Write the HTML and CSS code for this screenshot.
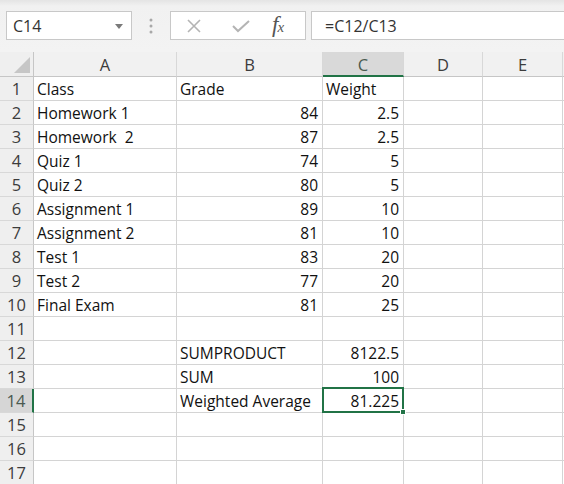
FILE: index.html
```html
<!DOCTYPE html>
<html>
<head>
<meta charset="utf-8">
<link rel="stylesheet" href="styles.css">
</head>
<body>
<div class="app">
  <div class="toolbar">
    <div class="namebox">
      <span class="nb-text">C14</span>
      <svg class="nb-arrow" width="8" height="5" viewBox="0 0 8 5"><path d="M0 0H8L4 5Z" fill="#7a7a7a"/></svg>
    </div>
    <div class="grip">
      <svg width="4" height="16" viewBox="0 0 4 16"><circle cx="2" cy="2" r="1.5" fill="#a8a8a8"/><circle cx="2" cy="8" r="1.5" fill="#a8a8a8"/><circle cx="2" cy="14" r="1.5" fill="#a8a8a8"/></svg>
    </div>
    <div class="fxbox">
      <svg class="ico" width="16" height="16" viewBox="0 0 16 16"><path d="M2 2L14 14M14 2L2 14" stroke="#b4b4b4" stroke-width="1.6" fill="none"/></svg>
      <svg class="ico" width="18" height="14" viewBox="0 0 18 14"><path d="M1 7L6 12L17 2" stroke="#b4b4b4" stroke-width="2" fill="none"/></svg>
      <span class="fx">f<span class="fx-x">x</span></span>
    </div>
    <div class="formula">=C12/C13</div>
  </div>
  <div class="sheet">
    <div class="corner"><span class="tri"></span></div>
    <div class="ch">A</div><div class="ch">B</div><div class="ch sel">C</div><div class="ch">D</div><div class="ch">E</div><div class="ch last"></div>

    <div class="rh">1</div><div class="c">Class</div><div class="c">Grade</div><div class="c">Weight</div><div class="c"></div><div class="c"></div><div class="c"></div>
    <div class="rh">2</div><div class="c">Homework 1</div><div class="c n">84</div><div class="c n">2.5</div><div class="c"></div><div class="c"></div><div class="c"></div>
    <div class="rh">3</div><div class="c pre">Homework  2</div><div class="c n">87</div><div class="c n">2.5</div><div class="c"></div><div class="c"></div><div class="c"></div>
    <div class="rh">4</div><div class="c">Quiz 1</div><div class="c n">74</div><div class="c n">5</div><div class="c"></div><div class="c"></div><div class="c"></div>
    <div class="rh">5</div><div class="c">Quiz 2</div><div class="c n">80</div><div class="c n">5</div><div class="c"></div><div class="c"></div><div class="c"></div>
    <div class="rh">6</div><div class="c">Assignment 1</div><div class="c n">89</div><div class="c n">10</div><div class="c"></div><div class="c"></div><div class="c"></div>
    <div class="rh">7</div><div class="c">Assignment 2</div><div class="c n">81</div><div class="c n">10</div><div class="c"></div><div class="c"></div><div class="c"></div>
    <div class="rh">8</div><div class="c">Test 1</div><div class="c n">83</div><div class="c n">20</div><div class="c"></div><div class="c"></div><div class="c"></div>
    <div class="rh">9</div><div class="c">Test 2</div><div class="c n">77</div><div class="c n">20</div><div class="c"></div><div class="c"></div><div class="c"></div>
    <div class="rh">10</div><div class="c">Final Exam</div><div class="c n">81</div><div class="c n">25</div><div class="c"></div><div class="c"></div><div class="c"></div>
    <div class="rh">11</div><div class="c"></div><div class="c"></div><div class="c"></div><div class="c"></div><div class="c"></div><div class="c"></div>
    <div class="rh">12</div><div class="c"></div><div class="c">SUMPRODUCT</div><div class="c n">8122.5</div><div class="c"></div><div class="c"></div><div class="c"></div>
    <div class="rh">13</div><div class="c"></div><div class="c">SUM</div><div class="c n">100</div><div class="c"></div><div class="c"></div><div class="c"></div>
    <div class="rh sel">14</div><div class="c"></div><div class="c">Weighted Average</div><div class="c n active">81.225<span class="handle"></span></div><div class="c"></div><div class="c"></div><div class="c"></div>
    <div class="rh">15</div><div class="c"></div><div class="c"></div><div class="c"></div><div class="c"></div><div class="c"></div><div class="c"></div>
    <div class="rh">16</div><div class="c"></div><div class="c"></div><div class="c"></div><div class="c"></div><div class="c"></div><div class="c"></div>
    <div class="rh">17</div><div class="c"></div><div class="c"></div><div class="c"></div><div class="c"></div><div class="c"></div><div class="c"></div>
  </div>
</div>
</body>
</html>
```

FILE: styles.css
```css
* { box-sizing: border-box; }
html, body { margin: 0; padding: 0; background: #fff; }
body { font-family: "Open Sans", "Liberation Sans", sans-serif; color: #111; overflow: hidden; }
.app { width: 564px; height: 484px; overflow: hidden; }

.toolbar {
  height: 52px;
  background: linear-gradient(#e4e4e4 0px, #f1f1f1 6px, #f3f3f3 100%);
  display: flex;
  align-items: flex-start;
  padding-top: 11px;
  padding-left: 6px;
}
.namebox {
  width: 126px; height: 29px;
  background: #fff;
  border: 1px solid #c8c8c8;
  display: flex; align-items: center; justify-content: space-between;
  padding: 0 8px 0 6px;
  font-size: 16px; color: #333;
}
.nb-arrow { margin-top: 1px; }
.grip { width: 38px; height: 29px; display: flex; align-items: center; justify-content: center; }
.fxbox {
  width: 136px; height: 29px;
  background: #fff;
  border: 1px solid #c8c8c8;
  display: flex; align-items: center;
  padding-left: 15px;
}
.fxbox .ico:first-child { margin-right: 30px; }
.fxbox .ico:nth-child(2) { margin-right: 22px; }
.fx { font-family: "Liberation Serif", "DejaVu Serif", serif; font-style: italic; font-size: 23px; color: #555; line-height: 1; margin-top: -2px; }
.fx-x { font-size: 15px; margin-left: -1px; }
.formula {
  margin-left: 5px;
  flex: 1; height: 29px;
  background: #fff;
  border: 1px solid #c8c8c8;
  border-right: none;
  display: flex; align-items: center;
  padding-left: 13px;
  font-size: 16px; color: #333;
}

.sheet {
  display: grid;
  grid-template-columns: 34px 143px 146px 81px 79px 80px 1fr;
  grid-template-rows: 25px repeat(17, 24px);
  font-size: 15.5px;
}
.corner { background: #efefef; border-right: 1px solid #c6c6c6; border-bottom: 1px solid #c6c6c6; position: relative; }
.tri {
  position: absolute; right: 3px; bottom: 3px;
  width: 0; height: 0;
  border-left: 16px solid transparent;
  border-bottom: 16px solid #c6c6c6;
}
.ch {
  background: #f1f1f1;
  border-right: 1px solid #d8d8d8;
  border-bottom: 1px solid #c6c6c6;
  display: flex; align-items: center; justify-content: center;
  font-size: 16.5px; color: #3c3c3c;
  padding-top: 1px;
}
.ch.sel { background: #d9d9d9; border-bottom: 2px solid #217346; color: #4a5a50; padding-top: 2px; }
.ch.last { border-right: none; }
.rh {
  background: #efefef;
  border-right: 1px solid #c6c6c6;
  border-bottom: 1px solid #d8d8d8;
  display: flex; align-items: center; justify-content: center;
  font-size: 16.5px; color: #3c3c3c;
}
.rh.sel { background: #d6d6d6; border-right: 2px solid #217346; color: #4a5a50; }
.c {
  border-right: 1px solid #d4d4d4;
  border-bottom: 1px solid #d4d4d4;
  display: flex; align-items: center;
  padding: 0 3px;
  white-space: nowrap;
  color: #111;
}
.c.pre { white-space: pre; }
.c.n { justify-content: flex-end; padding-right: 4px; }
.c.active { position: relative; }
.c.active::before {
  content: ""; position: absolute;
  left: -1px; top: -2px; right: -1px; bottom: -1px;
  border: 2px solid #217346;
}
.handle {
  position: absolute; right: -3px; bottom: -3px;
  width: 6px; height: 6px;
  background: #217346;
  border: 1px solid #fff;
  z-index: 2;
}
```
